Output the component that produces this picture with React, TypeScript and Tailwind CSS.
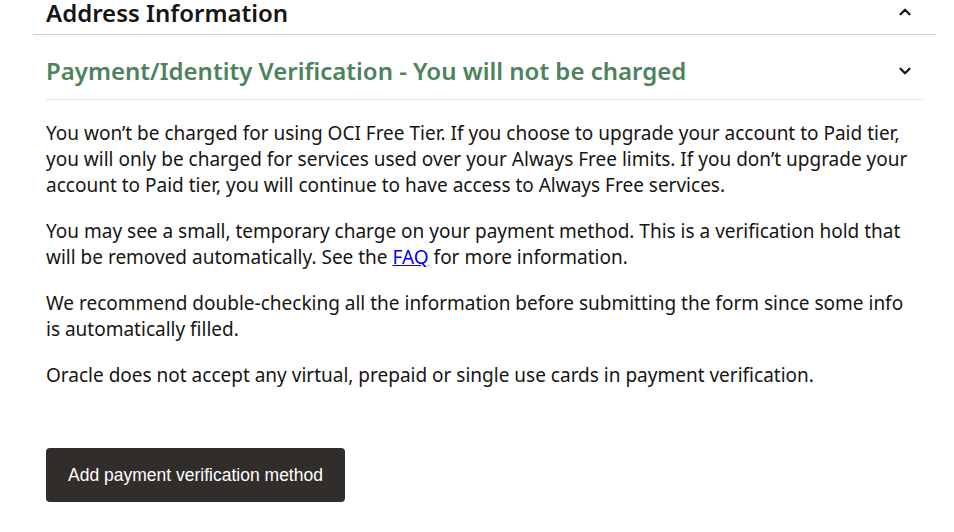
import { ChevronDown, ChevronUp } from "lucide-react";

const paragraphs = [
  "You won’t be charged for using OCI Free Tier. If you choose to upgrade your account to Paid tier, you will only be charged for services used over your Always Free limits. If you don’t upgrade your account to Paid tier, you will continue to have access to Always Free services.",
];

export default function App() {
  return (
    <div className="min-h-[532px] bg-white font-['Noto_Sans',sans-serif] text-[#161513]">
      {/* 閉じているセクション */}
      <div className="ml-[33px] w-[903px] border-b border-[#d0d0d0]">
        <div className="flex h-[34px] items-start justify-between pl-[13px] pr-[22px]">
          <h2 className="text-[24px] font-semibold leading-[26px]">Address Information</h2>
          <ChevronUp className="mt-[3px] h-[18px] w-[18px]" strokeWidth={3} />
        </div>
      </div>

      {/* 開いているセクション */}
      <div className="ml-[46px] w-[877px]">
        <div className="flex h-[65px] items-center justify-between border-b border-[#e4e4e4] pt-[7px]">
          <h2 className="text-[24px] font-semibold leading-[30px] text-[#4d825c]">
            Payment/Identity Verification - You will not be charged
          </h2>
          <ChevronDown className="mr-[9px] h-[18px] w-[18px]" strokeWidth={3} />
        </div>

        <div className="flex w-[870px] flex-col gap-[20px] pt-[20px] text-[19px] leading-[26px]">
          {paragraphs.map((p) => (
            <p key={p}>{p}</p>
          ))}
          <p>
            You may see a small, temporary charge on your payment method. This is a verification hold
            that will be removed automatically. See the{" "}
            <a href="#" className="text-[#0000ee] underline">
              FAQ
            </a>{" "}
            for more information.
          </p>
          <p>
            We recommend double-checking all the information before submitting the form since some
            info is automatically filled.
          </p>
          <p>Oracle does not accept any virtual, prepaid or single use cards in payment verification.</p>
        </div>

        <button className="mt-[60px] h-[54px] w-[299px] rounded-[4px] bg-[#312d2a] font-['Liberation_Sans',Arial,sans-serif] text-[17.5px] text-white">
          Add payment verification method
        </button>
      </div>
    </div>
  );
}
